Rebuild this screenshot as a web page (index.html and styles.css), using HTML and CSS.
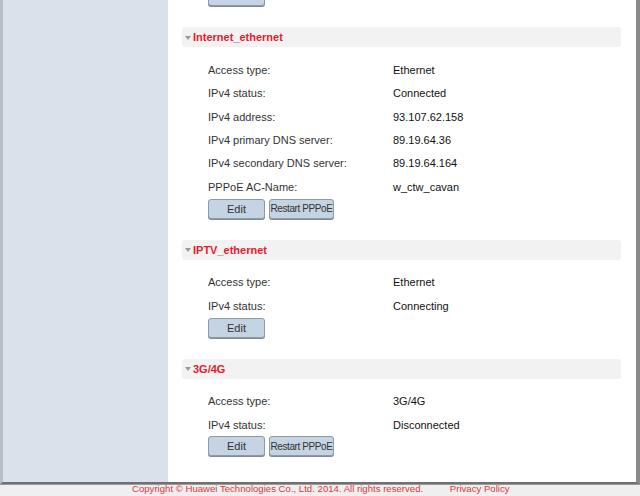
FILE: index.html
```html
<!DOCTYPE html>
<html>
<head>
	<title>WAN Information</title>
	<link rel="stylesheet" href="styles.css">
</head>
<body>

	<div class="frame">
		<div class="sidebar"></div>
		<main class="content">
			<div class="btn-row top-cut">
				<button class="btns" aria-label="Edit"></button>
			</div>

			<section class="wan-block">
				<div class="wan-title"><span class="arrow"></span>Internet_ethernet</div>
				<div class="wan-rows">
					<div class="row"><span class="label">Access type:</span><span class="val">Ethernet</span></div>
					<div class="row"><span class="label">IPv4 status:</span><span class="val">Connected</span></div>
					<div class="row"><span class="label">IPv4 address:</span><span class="val">93.107.62.158</span></div>
					<div class="row"><span class="label">IPv4 primary DNS server:</span><span class="val">89.19.64.36</span></div>
					<div class="row"><span class="label">IPv4 secondary DNS server:</span><span class="val">89.19.64.164</span></div>
					<div class="row"><span class="label">PPPoE AC-Name:</span><span class="val">w_ctw_cavan</span></div>
				</div>
				<div class="btn-row">
					<button class="btns">Edit</button>
					<button class="btns wide">Restart PPPoE</button>
				</div>
			</section>

			<section class="wan-block">
				<div class="wan-title"><span class="arrow"></span>IPTV_ethernet</div>
				<div class="wan-rows">
					<div class="row"><span class="label">Access type:</span><span class="val">Ethernet</span></div>
					<div class="row"><span class="label">IPv4 status:</span><span class="val">Connecting</span></div>
				</div>
				<div class="btn-row">
					<button class="btns">Edit</button>
				</div>
			</section>

			<section class="wan-block">
				<div class="wan-title"><span class="arrow"></span>3G/4G</div>
				<div class="wan-rows">
					<div class="row"><span class="label">Access type:</span><span class="val">3G/4G</span></div>
					<div class="row"><span class="label">IPv4 status:</span><span class="val">Disconnected</span></div>
				</div>
				<div class="btn-row">
					<button class="btns">Edit</button>
					<button class="btns wide">Restart PPPoE</button>
				</div>
			</section>
		</main>
	</div>

	<footer class="footer">
		<span>Copyright &copy; Huawei Technologies Co., Ltd. 2014. All rights reserved.</span>
		<a href="#" class="privacy">Privacy Policy</a>
	</footer>

</body>
</html>
```

FILE: styles.css
```css
*{
	margin: 0;
	padding: 0;
	box-sizing: border-box;
}
html, body{
	width: 640px;
	height: 496px;
	overflow: hidden;
	background: #efefef;
	font-family: "Liberation Sans", Arial, sans-serif;
	font-size: 11px;
	color: #222;
}
.frame{
	display: flex;
	height: 484px;
	border-left: 3px solid #b9bec4;
	border-right: 4px solid #8a8a8a;
	border-bottom: 2px solid #707070;
	box-shadow: 0 1px 0 #9a9a9a;
}
.sidebar{
	width: 165px;
	background: #d9e1ea;
}
.content{
	flex: 1;
	background: #fff;
	padding: 0 15px 0 14px;
	overflow: hidden;
}
.top-cut{
	margin-top: -14px;
}
.wan-block{
	margin-top: 21px;
}
.wan-title{
	display: flex;
	align-items: center;
	height: 20px;
	background: #f2f2f2;
	border-radius: 3px;
	padding-left: 3px;
	color: #e8192c;
	font-weight: bold;
	font-size: 11px;
}
.arrow{
	width: 0;
	height: 0;
	border-left: 3px solid transparent;
	border-right: 3px solid transparent;
	border-top: 4px solid #9a9a9a;
	margin-right: 2px;
	margin-top: 1px;
}
.wan-rows{
	padding-top: 11px;
	padding-left: 26px;
}
.row{
	display: flex;
	align-items: center;
	height: 23.45px;
}
.label{
	width: 185px;
	color: #333;
}
.val{
	color: #111;
}
.btn-row{
	display: flex;
	gap: 4px;
	padding-left: 26px;
}
.btns{
	width: 57px;
	height: 20px;
	background: #c4d4e2;
	border: 1px solid #8d9aa6;
	border-radius: 3px;
	font-family: "Liberation Sans", Arial, sans-serif;
	font-size: 11px;
	color: #333;
	box-shadow: 0 1px 0 #7f8b96;
	white-space: nowrap;
	cursor: pointer;
}
.btns.wide{
	width: 65px;
	padding: 0;
	font-size: 10px;
	letter-spacing: -0.4px;
}
.footer{
	height: 10px;
	padding-left: 132px;
	color: #e0343c;
	font-size: 9.6px;
	line-height: 10px;
	white-space: nowrap;
}
.privacy{
	color: #e0343c;
	text-decoration: none;
	margin-left: 24px;
}
```
